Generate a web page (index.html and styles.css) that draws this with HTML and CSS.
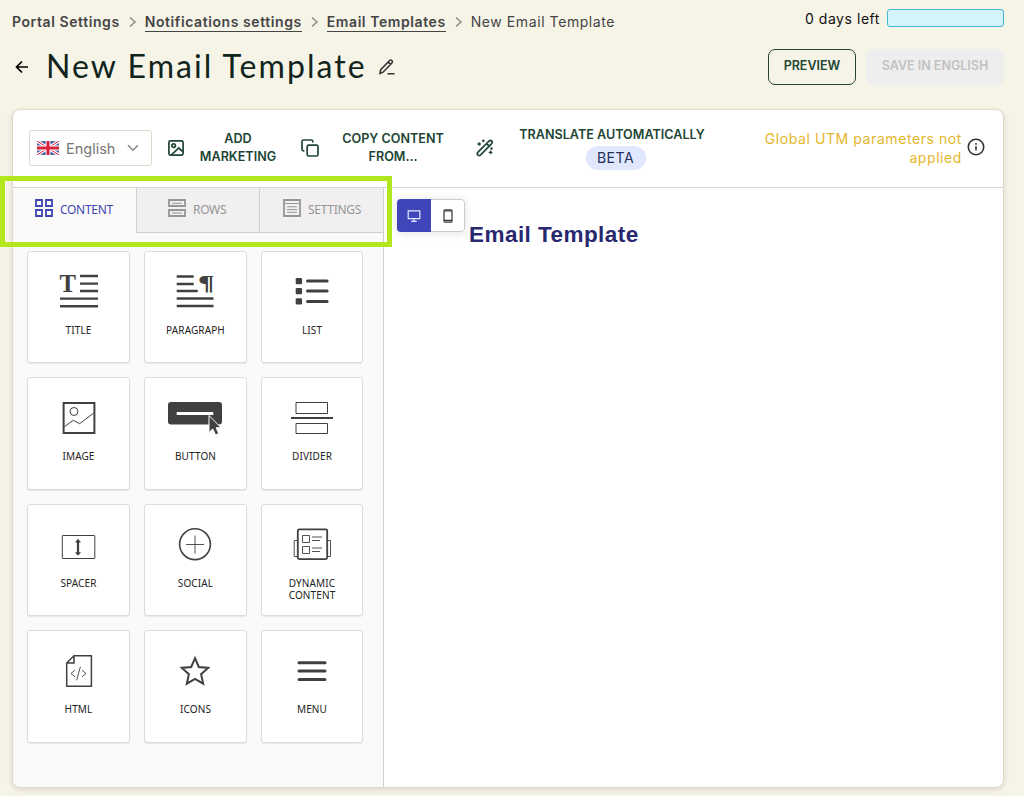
FILE: index.html
```html
<!DOCTYPE html>
<html lang="en">
<head>
    <meta charset="UTF-8">
    <meta name="viewport" content="width=device-width, initial-scale=1.0">
    <title>New Email Template</title>
    <link rel="stylesheet" href="styles.css">
</head>
<body>

    <!-- Page header -->
    <header class="page-header">
        <div class="header-left">
            <nav class="breadcrumb">
                <span class="crumb">Portal Settings</span>
                <svg class="sep" viewBox="0 0 8 12"><path d="M1 1.5 6 6l-5 4.5"/></svg>
                <a class="crumb" href="#">Notifications settings</a>
                <svg class="sep" viewBox="0 0 8 12"><path d="M1 1.5 6 6l-5 4.5"/></svg>
                <a class="crumb" href="#">Email Templates</a>
                <svg class="sep" viewBox="0 0 8 12"><path d="M1 1.5 6 6l-5 4.5"/></svg>
                <span class="crumb current">New Email Template</span>
            </nav>
            <div class="title-row">
                <svg class="back" viewBox="0 0 14 14"><path d="M13 7H2M7 1.5 1.5 7 7 12.5"/></svg>
                <h1>New Email Template</h1>
                <svg class="edit" viewBox="0 0 18 18"><path d="M2 15.5l.7-3.8L11.6 2.5q1.2-1 2.3 0 1.2 1.2 0 2.5L5 14.2zM10.3 4l2.4 2.4M9.5 15.8h7"/></svg>
            </div>
        </div>
        <div class="header-right">
            <div class="trial">
                <span>0 days left</span>
                <div class="trial-bar"></div>
            </div>
            <div class="actions">
                <button class="btn btn-outline">PREVIEW</button>
                <button class="btn btn-disabled" disabled>SAVE IN ENGLISH</button>
            </div>
        </div>
    </header>

    <!-- Editor -->
    <main class="editor">
        <div class="toolbar">
            <div class="language">
                <svg class="flag" viewBox="0 0 22 14">
                    <rect width="22" height="14" fill="#3a55b0"/>
                    <path d="M0 0l22 14M22 0L0 14" stroke="#fff" stroke-width="3.2"/>
                    <path d="M0 0l22 14M22 0L0 14" stroke="#d8213b" stroke-width="1"/>
                    <path d="M11 0v14M0 7h22" stroke="#fff" stroke-width="5"/>
                    <path d="M11 0v14M0 7h22" stroke="#d8213b" stroke-width="3"/>
                </svg>
                <span>English</span>
                <svg class="chevron" viewBox="0 0 12 8"><path d="M1 1.2l5 5 5-5"/></svg>
            </div>
            <div class="tool tool-marketing">
                <svg viewBox="0 0 18 18"><rect x="1.9" y="1.9" width="14.2" height="14.2" rx="1.5"/><circle cx="6.6" cy="6.6" r="1.8"/><path d="M4.5 15.8l7.3-6.8 4.2 3.8"/></svg>
                <span>ADD MARKETING</span>
            </div>
            <div class="tool tool-copy">
                <svg viewBox="0 0 18 18"><rect x="6.2" y="6.2" width="10.8" height="10.8" rx="1.5"/><path d="M3.4 11.8h-.9Q1 11.8 1 10.3V2.5Q1 1 2.5 1h7.8q1.5 0 1.5 1.5v.9"/></svg>
                <span>COPY CONTENT FROM...</span>
            </div>
            <div class="tool tool-translate">
                <svg viewBox="0 0 18 18"><path d="M1.8 13.4L13.2 2q1.2-1 2.4 0t0 2.6L4.4 16.1q-1.3 1-2.5 0-1.2-1.3-.1-2.7zM10.6 4.6l2.6 2.6"/><path class="spark" d="M3.2 3.2v3.6M1.4 5H5M7.3.4v2.8M5.9 1.8h2.8M14.6 11.4v3.8M12.7 13.3h3.8M15.5 8.3v2.4M14.3 9.5h2.4"/></svg>
                <div class="translate-text">
                    <span>TRANSLATE AUTOMATICALLY</span>
                    <span class="beta">BETA</span>
                </div>
            </div>
            <div class="utm">
                <span>Global UTM parameters not applied</span>
                <svg viewBox="0 0 18 18"><circle cx="9" cy="9" r="7.7"/><path d="M9 8.2v4.4M9 5.1v1.6"/></svg>
            </div>
        </div>

        <div class="workspace">
            <aside class="sidebar">
                <div class="tabs">
                    <div class="tab active">
                        <svg viewBox="0 0 18 18"><path d="M1 1h6v6H1zM11 1h6v6h-6zM1 11h6v6H1zM11 11h6v6h-6z"/></svg>
                        <span>CONTENT</span>
                    </div>
                    <div class="tab tab-rows">
                        <svg viewBox="0 0 18 18"><path d="M1 1h16v6H1zM1 11h16v6H1z"/><path class="thin" d="M4 4.2h10M4 14h10"/></svg>
                        <span>ROWS</span>
                    </div>
                    <div class="tab tab-settings">
                        <svg viewBox="0 0 18 18"><path d="M1 1h16v16H1z"/><path class="thin" d="M1 4.5h16M4 7.8h10M4 10.5h10M4 13.3h10"/></svg>
                        <span>SETTINGS</span>
                    </div>
                </div>

                <div class="tiles">
                    <div class="tile">
                        <svg viewBox="0 0 61 50">
                            <text x="11.5" y="26.2" font-size="26" textLength="16.5" lengthAdjust="spacingAndGlyphs">T</text>
                            <path d="M32 10h18M32 17.6h18M32 25h18M12 32.6h38M12 40.3h38" stroke-width="2.4"/>
                        </svg>
                        <span>TITLE</span>
                    </div>
                    <div class="tile">
                        <svg viewBox="0 0 61 50">
                            <text x="33" y="23.5" font-size="21" textLength="16.5" lengthAdjust="spacingAndGlyphs">¶</text>
                            <path d="M11.7 10.5h17M11.7 18h17M11.7 25h21M11.7 32.5h36.8M11.7 40h36.8" stroke-width="2.4"/>
                        </svg>
                        <span>PARAGRAPH</span>
                    </div>
                    <div class="tile">
                        <svg viewBox="0 0 61 50">
                            <g class="solid"><rect x="13.7" y="12" width="6.4" height="6.2" rx="1.2"/><rect x="13.7" y="22" width="6.4" height="6.2" rx="1.2"/><rect x="13.7" y="32.2" width="6.4" height="6.2" rx="1.2"/></g>
                            <path d="M25.5 15.1h19.6M25.5 25.1h19.6M25.5 35.4h19.6" stroke-width="3" stroke-linecap="round"/>
                        </svg>
                        <span>LIST</span>
                    </div>
                    <div class="tile">
                        <svg viewBox="0 0 61 50">
                            <rect x="15.6" y="11" width="30.8" height="30" stroke-width="2"/>
                            <circle cx="26" cy="19.5" r="4"/>
                            <path d="M16.3 34.7l9-6.4 6.3 3.4 14-10.5"/>
                        </svg>
                        <span>IMAGE</span>
                    </div>
                    <div class="tile">
                        <svg viewBox="0 0 61 50">
                            <rect class="solid" x="3" y="10" width="54" height="22.5" rx="3"/>
                            <path class="button-label" d="M11.7 21.5h36.6"/>
                            <path class="cursor" d="M44 23.5v17l3.8-3.6 2.7 6 3.2-1.4-2.6-5.8h5z"/>
                        </svg>
                        <span>BUTTON</span>
                    </div>
                    <div class="tile">
                        <svg viewBox="0 0 61 50">
                            <path d="M14 10.5h31.5v11H14zM14 31.5h31.5v10H14z"/>
                            <path d="M9 26h42" stroke-width="2"/>
                        </svg>
                        <span>DIVIDER</span>
                    </div>
                    <div class="tile">
                        <svg viewBox="0 0 61 50">
                            <rect x="14.3" y="16.5" width="32.5" height="23" rx=".5"/>
                            <path d="M30 22v13" stroke-width="2.2"/>
                            <path class="solid" d="M30 19.8l3 3.6h-6zM30 36.8l3-3.6h-6z"/>
                        </svg>
                        <span>SPACER</span>
                    </div>
                    <div class="tile">
                        <svg viewBox="0 0 61 50">
                            <circle cx="30" cy="25.2" r="15.4" stroke-width="1.6"/>
                            <path d="M21 25.5h18M30 16.5v18" stroke-width=".9"/>
                        </svg>
                        <span>SOCIAL</span>
                    </div>
                    <div class="tile">
                        <svg viewBox="0 0 61 50">
                            <rect x="15.8" y="10.3" width="29.4" height="29.8" rx="1.5" stroke-width="1.8"/>
                            <path d="M15 21.5h-2.8v16H15M46 21.5h2.5v16H46" stroke-width=".9"/>
                            <path d="M20.5 16.5h7v7h-7zM20.5 27.5h7v7h-7zM30 18h10M30 21.5h8M30 29h10M30 32.5h8" stroke-width=".9"/>
                        </svg>
                        <span>DYNAMIC<br>CONTENT</span>
                    </div>
                    <div class="tile">
                        <svg viewBox="0 0 61 50">
                            <path d="M26 10.7h17.4v30.6H18.7V18zM26 10.7V18h-7.3" stroke-width="1.5"/>
                            <path d="M27 25.2l-4 3.3 4 3.3M34 25.2l4 3.3-4 3.3M32.4 21.8l-3.8 13.6" stroke-width=".9"/>
                        </svg>
                        <span>HTML</span>
                    </div>
                    <div class="tile">
                        <svg viewBox="0 0 61 50">
                            <path d="M30 13.2l3.8 8.8 9.4.9-7.1 6.3 2.1 9.5-8.2-4.9-8.2 4.9 2.1-9.5-7.1-6.3 9.4-.9z" stroke-width="2"/>
                        </svg>
                        <span>ICONS</span>
                    </div>
                    <div class="tile">
                        <svg viewBox="0 0 61 50">
                            <path d="M17 17.7h26M17 26.1h26M17 34.5h26" stroke-width="3" stroke-linecap="round"/>
                        </svg>
                        <span>MENU</span>
                    </div>
                </div>
            </aside>

            <section class="canvas">
                <div class="device-switch">
                    <div class="device selected">
                        <svg viewBox="0 0 14 14"><path d="M1.2 1.8h11.6v7.8H1.2zM7 9.6v2.6M4.2 12.4h5.6"/></svg>
                    </div>
                    <div class="device">
                        <svg class="phone" viewBox="0 0 10 14"><rect x="1" y=".8" width="8" height="12.4" rx="1"/><path d="M1 2h8M1 11.3h8"/></svg>
                    </div>
                </div>
                <h2>Email Template</h2>
            </section>
        </div>

        <!-- Highlight around the tabs -->
        <div class="highlight"></div>
    </main>

</body>
</html>
```
FILE: styles.css
```css
* {
    box-sizing: border-box;
}

body {
    margin: 0;
    height: 796px;
    overflow: hidden;
    background-color: #f6f3e7;
    font-family: Inter, "Liberation Sans", sans-serif;
    color: #10241c;
}

svg {
    display: block;
    flex: none;
    fill: none;
    stroke: currentColor;
}

/* Page header */
.page-header {
    display: flex;
    justify-content: space-between;
    height: 109px;
    padding: 0 20px 0 12px;
}

.breadcrumb {
    display: flex;
    align-items: center;
    height: 20px;
    margin-top: 12px;
    font-size: 14px;
    color: #454545;
}

.crumb {
    height: 20px;
    line-height: 20px;
    font-weight: 600;
    letter-spacing: 0.58px;
    color: #454545;
    text-decoration: none;
    white-space: nowrap;
}

a.crumb {
    border-bottom: 1px solid #454545;
}

.crumb.current {
    font-weight: 400;
    letter-spacing: 0.58px;
}

.sep {
    width: 8px;
    height: 12px;
    margin: 0 8px 0 9px;
    color: #8f8f8c;
    stroke-width: 1.6;
}

.title-row {
    display: flex;
    align-items: center;
    height: 44px;
    margin-top: 13px;
}

.back {
    width: 14px;
    height: 14px;
    margin: 0 17px 0 3px;
    color: #000;
    stroke-width: 1.7;
}

h1 {
    margin: 0 0 2px;
    font-family: Lato, sans-serif;
    font-size: 32px;
    font-weight: 400;
    letter-spacing: 2.05px;
    line-height: 42px;
    white-space: nowrap;
}

.edit {
    width: 18px;
    height: 18px;
    margin-left: 11px;
    color: #333;
    stroke-width: 1.6;
}

.trial {
    display: flex;
    justify-content: flex-end;
    align-items: center;
    height: 18px;
    margin-top: 9px;
    font-size: 14px;
    letter-spacing: 0.55px;
    color: #111;
}

.trial-bar {
    width: 117px;
    height: 18px;
    margin-left: 7px;
    border: 1px solid #45b9d3;
    border-radius: 3px;
    background-color: #d3f4fb;
}

.actions {
    display: flex;
    gap: 10px;
    margin-top: 22px;
}

.btn {
    height: 36px;
    padding: 0 0 3px;
    border: 1px solid #214535;
    border-radius: 7px;
    background: none;
    font-family: inherit;
    font-size: 12.5px;
    font-weight: 600;
    color: #214535;
}

.btn-outline {
    width: 88px;
}

.btn-disabled {
    width: 138px;
    border-color: #eee;
    background-color: #eee;
    color: #c2c2c2;
}

/* Editor */
.editor {
    position: relative;
    width: 992px;
    height: 679px;
    margin-left: 12px;
    border: 1px solid #dcdacb;
    border-radius: 8px;
    background-color: #fff;
    box-shadow: 0 2px 5px rgba(80, 80, 50, 0.15);
}

.toolbar {
    display: flex;
    align-items: center;
    height: 78px;
    padding: 0 18px 1px 16px;
    border-bottom: 1px solid #d9d7cc;
}

.language {
    display: flex;
    align-items: center;
    width: 123px;
    height: 36px;
    padding: 0 12px 0 7px;
    border: 1px solid #dcdacb;
    border-radius: 3px;
    font-size: 14.5px;
    color: #777;
}

.flag {
    width: 22px;
    height: 14px;
    margin-right: 7px;
}

.chevron {
    width: 12px;
    height: 8px;
    margin-left: auto;
    stroke-width: 1.6;
    color: #888;
}

.tool {
    display: flex;
    align-items: center;
    font-size: 12.6px;
    font-weight: 600;
    line-height: 18px;
    text-align: center;
    color: #214535;
}

.tool svg {
    width: 18px;
    height: 18px;
    stroke-width: 1.7;
}

.tool svg .spark {
    stroke-width: 1.3;
}

.tool-marketing {
    width: 126px;
    margin-left: 15px;
}

.tool-marketing span {
    width: 78px;
    margin-left: 14px;
}

.tool-copy {
    width: 158px;
    margin-left: 8px;
}

.tool-copy span {
    width: 112px;
    margin-left: 18px;
}

.tool-translate {
    margin-left: 17px;
}

.translate-text {
    display: flex;
    flex-direction: column;
    align-items: center;
    width: 186px;
    margin: -1px 0 0 25px;
    white-space: nowrap;
}

.beta {
    width: 60px;
    height: 24px;
    margin: 2px 0 0 7px;
    border-radius: 12px;
    background-color: #e1e8fd;
    font-size: 14px;
    font-weight: 400;
    letter-spacing: 0.5px;
    line-height: 24px;
    color: #20305c;
}

.utm {
    display: flex;
    align-items: center;
    margin-left: auto;
    font-size: 14px;
    letter-spacing: 0.58px;
    line-height: 19px;
    text-align: right;
    color: #e4b62c;
}

.utm span {
    width: 210px;
}

.utm svg {
    width: 18px;
    height: 18px;
    margin: 0 0 2px 5px;
    stroke-width: 1.6;
    color: #333;
}

.workspace {
    display: flex;
    height: 599px;
}

/* Sidebar */
.sidebar {
    width: 371px;
    border-right: 1px solid #d0d0d0;
    border-radius: 0 0 0 8px;
    background-color: #fafaf8;
}

.tabs {
    display: grid;
    grid-template-columns: 123px 123px 124px;
    height: 45px;
}

.tab {
    display: flex;
    padding: 11px 0 0 22px;
    font-family: "Noto Sans", sans-serif;
    font-size: 12px;
    line-height: 22px;
    letter-spacing: -0.3px;
    border-left: 1px solid #cfcfcf;
    border-bottom: 1px solid #cfcfcf;
    background-color: #f1eff0;
    color: #949698;
}

.tab.active {
    padding-left: 21px;
    border-color: transparent;
    background: none;
    color: #3f45b5;
}

.tab svg {
    width: 18px;
    height: 18px;
    margin-right: 7px;
    stroke-width: 1.8;
}

.tab svg .thin {
    stroke-width: 1.1;
}

.tab-rows {
    padding-left: 31px;
}

.tab-settings {
    padding-left: 23px;
}

.tiles {
    display: grid;
    grid-template-columns: 103px 103px 102px;
    grid-template-rows: 112px 113px 112px 113px;
    gap: 14px;
    padding: 18px 0 0 14px;
}

.tile {
    padding-top: 14px;
    border: 1px solid #dcdcdc;
    border-radius: 3px;
    background-color: #fff;
    box-shadow: 0 1px 1px rgba(0, 0, 0, 0.08);
    font-family: "Noto Sans", sans-serif;
    font-size: 10px;
    line-height: 12px;
    letter-spacing: 0.12px;
    text-align: center;
    color: #222;
}

.tile svg {
    width: 61px;
    height: 50px;
    margin: 0 0 8px 20px;
    color: #404040;
}

.tile span {
    display: block;
}

.tile text {
    font-family: "Liberation Serif", serif;
    font-weight: bold;
    letter-spacing: 0;
    fill: #404040;
    stroke: none;
}

.tile .solid {
    fill: #404040;
    stroke: none;
}

.tile .button-label {
    stroke: #fff;
    stroke-width: 2.8;
}

.tile .cursor {
    fill: #404040;
    stroke: #fff;
}

/* Canvas */
.canvas {
    display: flex;
    align-items: flex-start;
    padding: 11px 0 0 13px;
}

.device-switch {
    display: flex;
    width: 68px;
    height: 33px;
    border-radius: 4px;
    overflow: hidden;
    box-shadow: 0 1px 8px rgba(0, 0, 0, 0.12);
}

.device {
    display: flex;
    align-items: center;
    justify-content: center;
    width: 34px;
    border: 1px solid #ccc;
    border-left: none;
    border-radius: 0 4px 4px 0;
    color: #333;
}

.device svg {
    width: 14px;
    height: 14px;
    stroke-width: 1.2;
}

.device svg.phone {
    width: 10px;
}

.device.selected {
    border: none;
    border-radius: 0;
    background-color: #3f46ba;
    color: #e6e7ff;
}

h2 {
    margin: 22px 0 0 4px;
    font-family: "Liberation Sans", Arial, sans-serif;
    font-size: 22.5px;
    line-height: 28px;
    letter-spacing: 0.45px;
    color: #28286f;
}

.highlight {
    position: absolute;
    top: 66px;
    left: -13px;
    width: 392px;
    height: 71px;
    border: 5px solid #b4e61d;
}
```
